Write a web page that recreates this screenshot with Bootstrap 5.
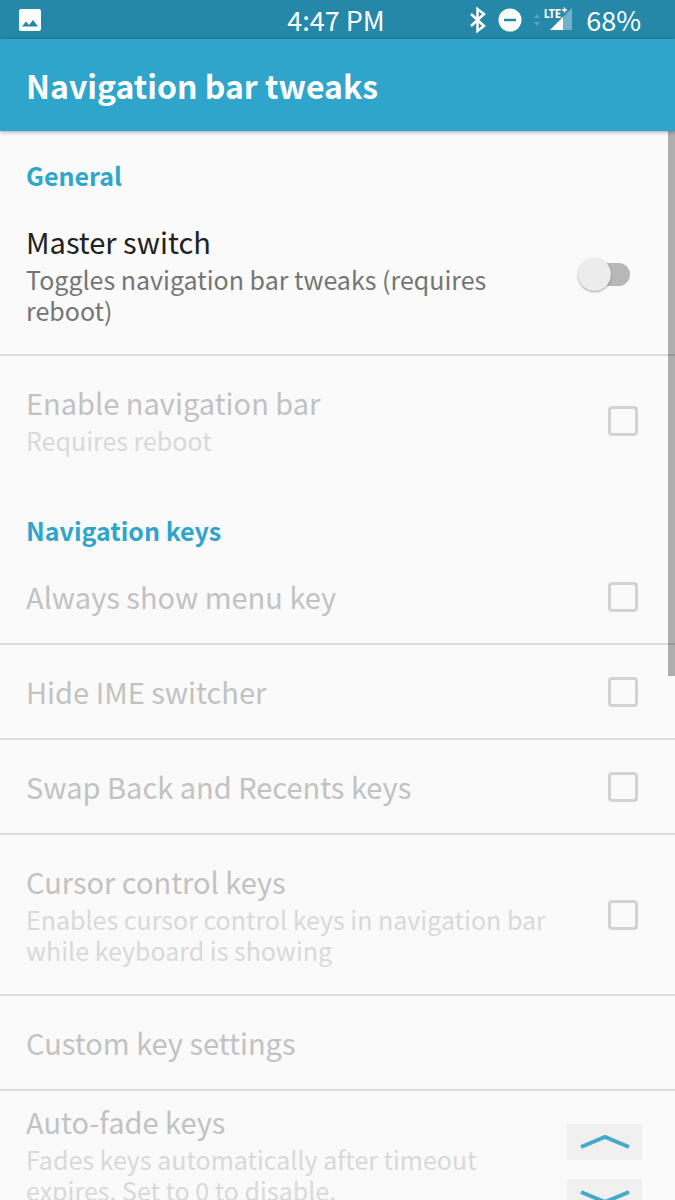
<!DOCTYPE html>
<html lang="en">
<head>
<meta charset="utf-8">
<meta name="viewport" content="width=device-width, initial-scale=1">
<title>Navigation bar tweaks</title>
<link href="https://cdn.jsdelivr.net/npm/bootstrap@5.3.0/dist/css/bootstrap.min.css" rel="stylesheet">
<style>
  body { font-family: "Noto Sans CJK SC", "Noto Sans", sans-serif; background: #fafafa; color: #212121; }
  .status-bar { height: 39px; background: #2588a8; color: #fff; font-size: 27px; line-height: 36px; padding: 0 34px 0 19px; }
  .status-side { flex: 1 1 0; }
  .status-bar time { margin-left: 12px; }
  .status-icons { margin-right: 14px; }
  .status-bar svg { display: block; }
  .net-label { font-family: "Roboto Condensed", "Open Sans Condensed", "Noto Sans CJK SC", sans-serif; font-weight: 700; font-size: 12px; }
  .app-bar { height: 92px; background: #30a5cc; color: #fff; padding: 0 26px; box-shadow: 0 1px 4px rgba(0,0,0,.35); z-index: 2; }
  .app-bar h1 { font-size: 32px; line-height: 40px; font-weight: 700; }
  .section-title { height: 64px; padding: 29px 26px 0; font-size: 25px; line-height: 31px; font-weight: 700; color: #30a5cc; }
  .pref { padding: 27px 37px 26px 26px; border-bottom: 2px solid #dcdcdc; }
  .pref.last { border-bottom-color: transparent; }
  .pref-name { display: block; font-size: 29px; line-height: 39px; margin-bottom: 1px; }
  .pref-note { margin: 3px 0 2px; font-size: 25px; line-height: 31px; color: #757575; max-width: 530px; }
  .off .pref-name { color: #c2c2c2; }
  .off .pref-note { color: #d9d9d9; }
  .pref .tick { appearance: none; width: 30px; height: 30px; margin: 0; border: 3px solid #d3d3d3; border-radius: 4px; background: transparent; opacity: 1; }
  .pref .toggle { appearance: none; position: relative; width: 52px; height: 34px; margin: 0 8px 0 0; }
  .toggle::before { content: ""; position: absolute; left: 12px; right: 0; top: 5px; height: 23px; border-radius: 12px; background: #b7b7b7; }
  .toggle::after { content: ""; position: absolute; left: 0; top: 0; width: 33px; height: 33px; border-radius: 50%; background: #ececec; box-shadow: 0 1px 2px rgba(0,0,0,.35); }
  .pref-number { padding: 11px 33px 26px 26px; }
  .stepper { gap: 19px; padding-top: 22px; }
  .step { width: 75px; height: 36px; background: #f0f0f0; border: 0; padding: 0; }
  .step svg { display: block; margin: auto; }
  .scroll-thumb { width: 7px; height: 51%; background: rgba(0,0,0,.3); }
</style>
</head>
<body class="vh-100 overflow-hidden d-flex flex-column">
<div class="status-bar d-flex align-items-center flex-shrink-0">
  <div class="status-side">
    <svg width="22" height="22" viewBox="0 0 22 22"><rect width="22" height="22" rx="2" fill="#fff"/><path d="M3 17.500l4-5 3 3.500 4-5 5 6.500z" fill="#2588a8"/></svg>
  </div>
  <time>4:47 PM</time>
  <div class="status-side d-flex align-items-center justify-content-end">
    <svg width="104" height="39" viewBox="0 0 104 39" class="status-icons flex-shrink-0" aria-label="Bluetooth, do not disturb, LTE+">
      <path d="M3 14l13 12-6.500 5V9l6.500 5L3 26" fill="none" stroke="#fff" stroke-width="2.500"/>
      <circle cx="42" cy="20" r="11.500" fill="#fff"/><path d="M36 20h12" stroke="#2588a8" stroke-width="2.500"/>
      <path d="M66 18l3-4 3 4zM66 22l3 4 3-4z" fill="#5ba6be"/>
      <path d="M82 30l22-22v22z" fill="#6fb1c6"/><path d="M82 30l13-13v13z" fill="#fff"/>
      <text x="76" y="18" class="net-label" fill="#fff">LTE</text>
      <path d="M94 10h5M96.500 7.500v5" stroke="#fff" stroke-width="1.500"/>
    </svg>
    <span>68%</span>
  </div>
</div>
<header class="app-bar d-flex align-items-center flex-shrink-0 position-relative"><h1 class="m-0">Navigation bar tweaks</h1></header>
<main class="flex-fill overflow-hidden position-relative">
  <section>
    <h2 class="section-title m-0">General</h2>
    <div class="pref d-flex align-items-center justify-content-between">
      <div><label class="pref-name" for="master">Master switch</label><div class="pref-note">Toggles navigation bar tweaks (requires reboot)</div></div>
      <input class="toggle flex-shrink-0" type="checkbox" role="switch" id="master">
    </div>
    <div class="pref off last d-flex align-items-center justify-content-between">
      <div><label class="pref-name" for="enable">Enable navigation bar</label><div class="pref-note">Requires reboot</div></div>
      <input class="tick flex-shrink-0" type="checkbox" id="enable" disabled>
    </div>
  </section>
  <section>
    <h2 class="section-title m-0">Navigation keys</h2>
    <div class="pref off d-flex align-items-center justify-content-between">
      <label class="pref-name" for="menu">Always show menu key</label>
      <input class="tick flex-shrink-0" type="checkbox" id="menu" disabled>
    </div>
    <div class="pref off d-flex align-items-center justify-content-between">
      <label class="pref-name" for="ime">Hide IME switcher</label>
      <input class="tick flex-shrink-0" type="checkbox" id="ime" disabled>
    </div>
    <div class="pref off d-flex align-items-center justify-content-between">
      <label class="pref-name" for="swap">Swap Back and Recents keys</label>
      <input class="tick flex-shrink-0" type="checkbox" id="swap" disabled>
    </div>
    <div class="pref off d-flex align-items-center justify-content-between">
      <div><label class="pref-name" for="cursor">Cursor control keys</label><div class="pref-note">Enables cursor control keys in navigation bar while keyboard is showing</div></div>
      <input class="tick flex-shrink-0" type="checkbox" id="cursor" disabled>
    </div>
    <div class="pref off"><span class="pref-name">Custom key settings</span></div>
    <div class="pref pref-number off d-flex justify-content-between">
      <div><label class="pref-name" for="fade-up">Auto-fade keys</label><div class="pref-note">Fades keys automatically after timeout expires. Set to 0 to disable.</div></div>
      <div class="stepper flex-shrink-0 d-flex flex-column">
        <button class="step" type="button" id="fade-up" aria-label="Increase"><svg width="50" height="16" viewBox="0 0 50 16"><path d="M1 13L25 3l24 10" fill="none" stroke="#45a9cb" stroke-width="4"/></svg></button>
        <button class="step" type="button" aria-label="Decrease"><svg width="50" height="16" viewBox="0 0 50 16"><path d="M1 3l24 10L49 3" fill="none" stroke="#45a9cb" stroke-width="4"/></svg></button>
      </div>
    </div>
  </section>
  <div class="scroll-thumb position-absolute top-0 end-0"></div>
</main>
<script src="https://cdn.jsdelivr.net/npm/bootstrap@5.3.0/dist/js/bootstrap.bundle.min.js"></script>
</body>
</html>
